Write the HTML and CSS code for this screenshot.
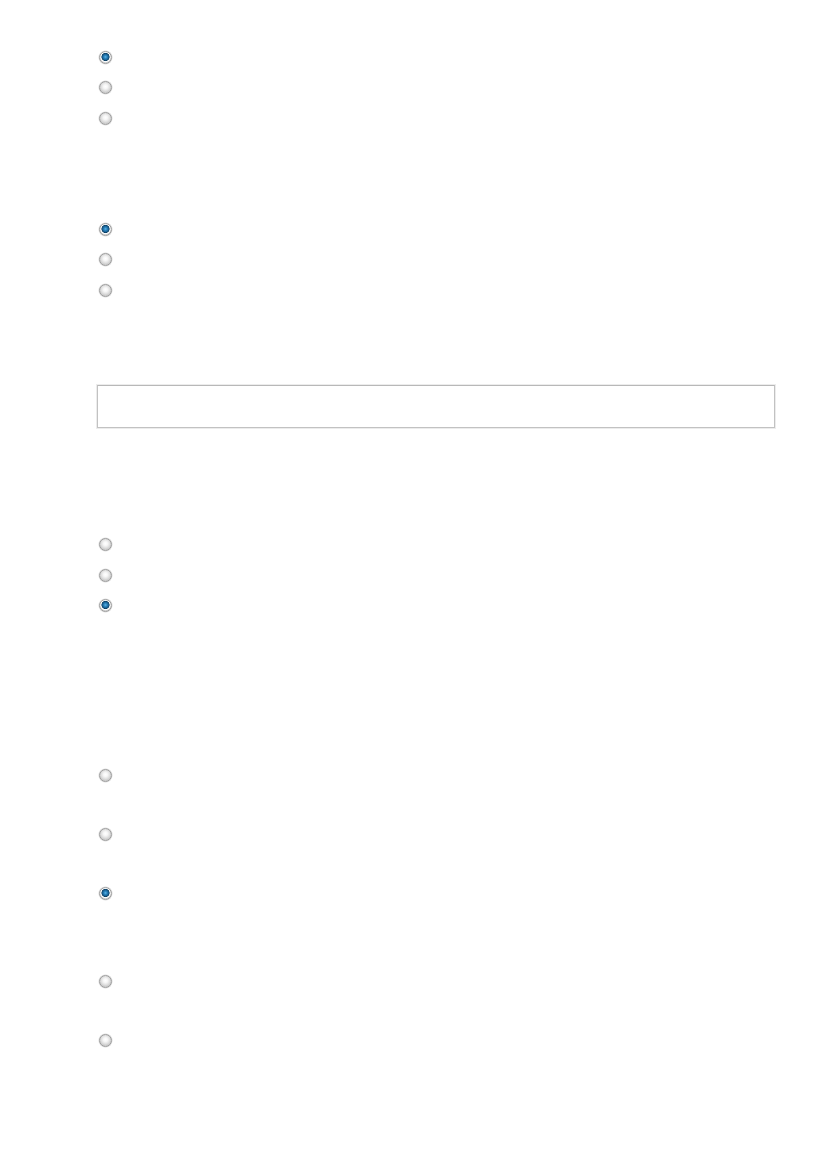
FILE: index.html
```html
<!DOCTYPE html>
<html lang="en">
<head>
<meta charset="UTF-8">
<meta name="viewport" content="width=device-width, initial-scale=1.0">
<title>Survey</title>
<link rel="stylesheet" href="styles.css">
</head>
<body>

<form class="survey">
    <div class="group">
        <label class="option"><input type="radio" name="q1" checked></label>
        <label class="option"><input type="radio" name="q1"></label>
        <label class="option"><input type="radio" name="q1"></label>
    </div>

    <div class="group group-next">
        <label class="option"><input type="radio" name="q2" checked></label>
        <label class="option"><input type="radio" name="q2"></label>
        <label class="option"><input type="radio" name="q2"></label>
    </div>

    <div class="text-field">
        <input type="text" class="answer">
    </div>

    <div class="group group-third">
        <label class="option"><input type="radio" name="q3"></label>
        <label class="option"><input type="radio" name="q3"></label>
        <label class="option"><input type="radio" name="q3" checked></label>
    </div>

    <div class="group group-long">
        <label class="option option-long"><input type="radio" name="q4"></label>
        <label class="option option-long"><input type="radio" name="q4"></label>
        <label class="option option-long option-tall"><input type="radio" name="q4" checked></label>
        <label class="option option-long"><input type="radio" name="q4"></label>
        <label class="option option-long"><input type="radio" name="q4"></label>
    </div>
</form>

</body>
</html>
```

FILE: styles.css
```css
body {
    margin: 0;
    background: #fff;
    font-family: 'Liberation Sans', Arial, sans-serif;
    font-size: 13px;
    color: #333;
}

.survey {
    padding: 42px 52px 0 97px;
}

.group {
    display: flex;
    flex-direction: column;
}

.group-next {
    margin-top: 80.5px;
}

.group-third {
    margin-top: 101.5px;
}

.group-long {
    margin-top: 139px;
}

.option {
    display: flex;
    align-items: center;
    height: 30.5px;
    padding-left: 2px;
}

.option-long {
    align-items: flex-start;
    height: 59px;
    padding-top: 8.75px;
    box-sizing: border-box;
}

.option-tall {
    height: 88px;
}

input[type='radio'] {
    appearance: none;
    -webkit-appearance: none;
    margin: 0;
    width: 13px;
    height: 13px;
    border-radius: 50%;
    border: 1px solid #9c9c9c;
    box-sizing: border-box;
    background: radial-gradient(circle at 50% 42%, #fff 0, #f7f7f7 2px, #e2e2e2 4px, #cfcfcf 5.5px);
    box-shadow: 0 0 0 0.5px #dcdcdc;
}

input[type='radio']:checked {
    background: radial-gradient(circle at 50% 45%, #5cb6ea 0, #2a82bb 1.6px, #175f92 3px, #0b3a5c 3.8px, #cfdbe3 4.2px, #fff 4.6px, #f0f0f0 5px, #d4d4d4 5.5px);
}

.text-field {
    margin-top: 79.5px;
}

.answer {
    display: block;
    width: 678px;
    height: 43px;
    margin: 0;
    padding: 6px 8px;
    box-sizing: border-box;
    border: 1px solid #c2c2c2;
    border-top-color: #b8b8b8;
    box-shadow: 0 0 0 1px #ececec;
    background: #fff;
    font-family: inherit;
}

.answer:focus {
    outline: none;
}
```
